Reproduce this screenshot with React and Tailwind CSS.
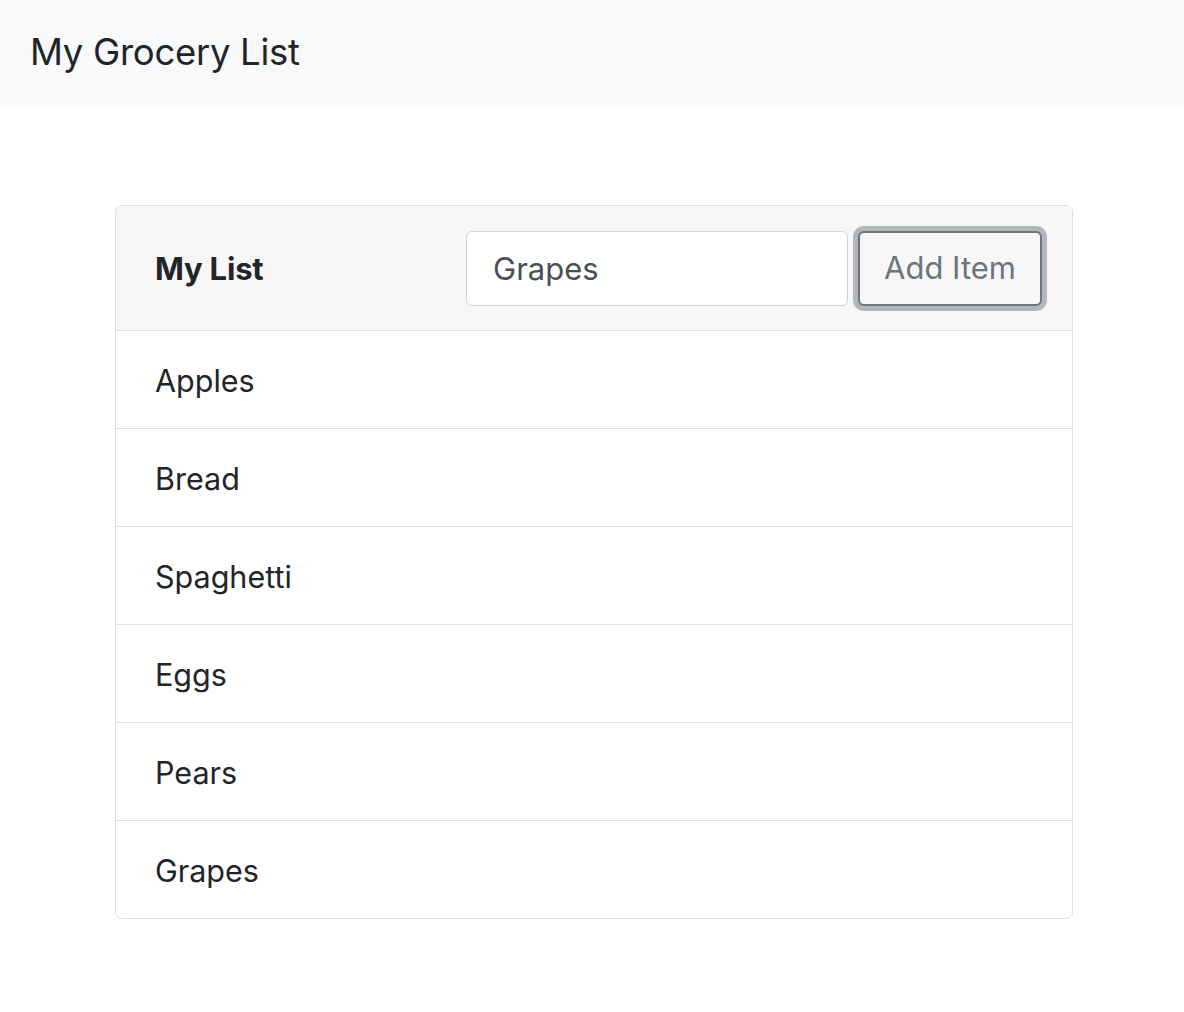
const items = ["Apples", "Bread", "Spaghetti", "Eggs", "Pears", "Grapes"];

const App = () => {
	return (
		<div className="min-h-screen bg-white text-[#212529] font-['Inter','Noto_Sans',sans-serif]">
			{/* Navbar */}
			<nav className="h-[107px] bg-[#f8f9fa] flex items-center px-[30px]">
				<span className="text-[36.5px] leading-none tracking-[-0.3px] pb-[2px]">My Grocery List</span>
			</nav>

			{/* Card */}
			<div className="mt-[98px] ml-[115px] w-[958px] border border-[#dfdfdf] rounded-[7px] overflow-hidden">
				<div className="h-[125px] bg-[#f7f7f7] border-b border-[#dfdfdf] flex items-center pl-[39px] pr-[30px]">
					<h2 className="flex-1 text-[31px] font-bold tracking-[-0.2px] pt-[3px]">My List</h2>
					<input
						type="text"
						defaultValue="Grapes"
						className="w-[382px] h-[75px] bg-white border border-[#ced4da] rounded-[6px] px-[26px] text-[31px] text-[#495057] outline-none"
					/>
					<button className="ml-[10px] w-[184px] h-[75px] border-2 border-[#6c757d] rounded-[6px] ring-[5px] ring-[#b3b7bb] text-[31px] text-[#6c757d] bg-[#f7f7f7]">
						Add Item
					</button>
				</div>
				<ul>
					{items.map((item, ind) => (
						<li
							key={ind}
							className="h-[98px] flex items-center pl-[39px] pt-[2px] text-[30.5px] border-b border-[#dfdfdf] last:border-b-0 last:h-[97px]"
						>
							{item}
						</li>
					))}
				</ul>
			</div>
		</div>
	);
};

export default App;
